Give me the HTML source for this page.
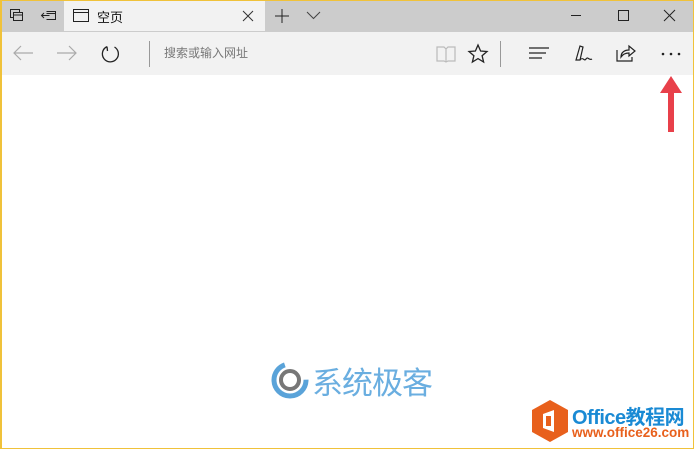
<!DOCTYPE html>
<html><head><meta charset="utf-8"><style>
*{margin:0;padding:0;box-sizing:border-box}
body{width:694px;height:449px;overflow:hidden;background:#fff;font-family:"Liberation Sans","Noto Sans CJK SC",sans-serif;position:relative}
.frame{position:absolute;left:0;top:0;width:694px;height:449px;border:1px solid #f0c23a;border-left-width:2px;}
.tabbar{position:absolute;left:2px;top:1px;width:691px;height:31px;background:#cccccc}
.tab{position:absolute;left:64px;top:0;width:201px;height:31px;background:#f2f2f2}
.toolbar{position:absolute;left:2px;top:32px;width:691px;height:43px;background:#f2f2f2}
svg{position:absolute;overflow:visible}
.t{position:absolute;font-size:12px;color:#777}
</style></head><body>
<div class="tabbar"></div>
<div class="tab"></div>
<div class="toolbar"></div>
<svg style="left:10px;top:9px" width="16" height="14" fill="none" stroke="#222" stroke-width="1"><rect x="0.5" y="0.5" width="9" height="8"/><rect x="3.5" y="3.5" width="9" height="8" fill="#ccc"/><line x1="3.5" y1="6" x2="12.5" y2="6"/></svg>
<svg style="left:41px;top:10px" width="16" height="12" fill="none" stroke="#222" stroke-width="1"><path d="M5.5 1.5h9v8h-9M0.5 5.5h8M3 3l-2.5 2.5 2.5 2.5M5.5 3.5h9"/></svg>
<svg style="left:73px;top:9px" width="16" height="13" fill="none" stroke="#222" stroke-width="1"><rect x="0.5" y="0.5" width="15" height="12"/><line x1="0.5" y1="3.5" x2="15.5" y2="3.5"/></svg>
<div class="t" style="left:97px;top:7px;font-size:13px;color:#111">空页</div>
<svg style="left:243px;top:11px" width="10" height="10" stroke="#333" stroke-width="1"><path d="M0 0L10 10M10 0L0 10"/></svg>
<svg style="left:275px;top:9px" width="14" height="14" stroke="#222" stroke-width="1"><path d="M7 0V14M0 7H14"/></svg>
<svg style="left:307px;top:12px" width="13" height="7" fill="none" stroke="#444" stroke-width="1"><path d="M0 0L6.5 6.5 13 0"/></svg>
<svg style="left:571px;top:15px" width="10" height="1" stroke="#222"><path d="M0 0.5H10"/></svg>
<svg style="left:618px;top:10px" width="11" height="11" fill="none" stroke="#222"><rect x="0.5" y="0.5" width="10" height="10"/></svg>
<svg style="left:664px;top:10px" width="11" height="11" stroke="#222"><path d="M0 0L11 11M11 0L0 11"/></svg>
<svg style="left:13px;top:45px" width="20" height="16" fill="none" stroke="#aaa" stroke-width="1.2"><path d="M20 8H1M8 1L1 8 8 15"/></svg>
<svg style="left:57px;top:45px" width="20" height="16" fill="none" stroke="#aaa" stroke-width="1.2"><path d="M0 8H19M12 1L19 8 12 15"/></svg>
<svg style="left:101px;top:44px" width="20" height="20" fill="none" stroke="#222" stroke-width="1.3"><path d="M13.5 3A8 8 0 1 1 6 2.6"/><path d="M6 2.6L6.5 7"/></svg>
<div style="position:absolute;left:149px;top:41px;width:1px;height:26px;background:#999"></div>
<div class="t" style="left:164px;top:44px">搜索或输入网址</div>
<svg style="left:436px;top:45px" width="20" height="18" fill="none" stroke="#bbb" stroke-width="1.2"><path d="M1 2h7l2 2 2-2h7v14h-7l-2 1-2-1H1z M10 4V17"/></svg>
<svg style="left:468px;top:44px" width="20" height="19" fill="none" stroke="#222" stroke-width="1.3"><path d="M10 1l2.6 6 6.4 0.5-4.9 4.2 1.5 6.3L10 14.6 4.4 18l1.5-6.3L1 7.5 7.4 7z"/></svg>
<div style="position:absolute;left:500px;top:41px;width:1px;height:26px;background:#999"></div>
<svg style="left:529px;top:47px" width="20" height="12" stroke="#222" stroke-width="1.2"><path d="M0 1H20M0 6H17M0 11H13"/></svg>
<svg style="left:573px;top:44px" width="20" height="20" fill="none" stroke="#222" stroke-width="1.2"><path d="M3 16L7 2l3 1-3 13-4 0zM7 16c3-4 4 2 6-1s3 2 6 0"/></svg>
<svg style="left:616px;top:43px" width="20" height="20" fill="none" stroke="#222" stroke-width="1.2"><path d="M1 7V18H16V14M5 14C5 9 9 7 13 7V3l6 5-6 5V10C10 10 7 11 5 14z"/></svg>
<svg style="left:661px;top:52px" width="20" height="4" fill="#222"><circle cx="2" cy="2" r="1.3"/><circle cx="10" cy="2" r="1.3"/><circle cx="18" cy="2" r="1.3"/></svg>
<svg style="left:660px;top:76px" width="22" height="60"><path d="M11 0L22 17H14V56H8V17H0z" fill="#e8404a"/></svg>
<svg style="left:272px;top:362px" width="40" height="36"><circle cx="18" cy="18" r="16" fill="none" stroke="#5aa3d9" stroke-width="5" stroke-dasharray="70 30"/><circle cx="18" cy="18" r="9" fill="none" stroke="#777" stroke-width="4"/></svg>
<div class="t" style="left:312px;top:358px;font-size:31px;color:#6aaee0;letter-spacing:-1px">系统极客</div>
<svg style="left:532px;top:400px" width="36" height="42"><path d="M18 0L36 10V32L18 42 0 32V10z" fill="#e8601c"/><path d="M11 14L22 10V32L11 28z" fill="#fff"/><rect x="14" y="16" width="5" height="10" fill="#e8601c"/></svg>
<div class="t" style="left:572px;top:401px;font-size:20px;font-weight:bold;color:#1a8ad4;letter-spacing:-0.5px">Office教程网</div>
<div class="t" style="left:572px;top:425px;font-size:13.5px;font-weight:bold;color:#e8601c">www.office26.com</div>
<div class="frame"></div>
</body></html>
